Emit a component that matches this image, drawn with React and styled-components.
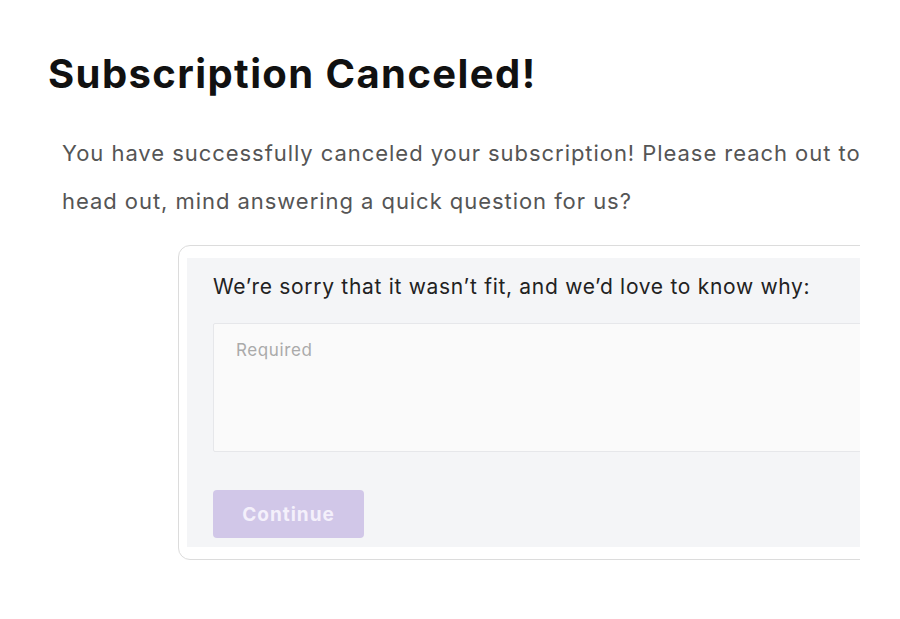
import styled, { createGlobalStyle } from "styled-components"

const GlobalStyle = createGlobalStyle`
  body {
    margin: 0;
    background: #ffffff;
    font-family: "Inter", "Liberation Sans", sans-serif;
  }
`

const Page = styled.div`
  width: 860px;
  height: 619px;
  overflow: hidden;
  padding-top: 50px;
  box-sizing: border-box;
`

const Title = styled.h1`
  margin: 0 0 0 48px;
  font-size: 40px;
  line-height: 48px;
  font-weight: 700;
  color: #111111;
  letter-spacing: 1.4px;
`

const Intro = styled.p`
  margin: 31px 0 0 62px;
  font-size: 22px;
  line-height: 48px;
  color: #555555;
  letter-spacing: 0.95px;
  white-space: nowrap;
`

const Card = styled.div`
  margin: 20px 0 0 178px;
  width: 800px;
  padding: 12px 0 12px 8px;
  border: 1.5px solid #dcdcdc;
  border-radius: 12px;
  background: #ffffff;
`

const Panel = styled.div`
  background: #f4f5f7;
  padding: 17px 0 9px 26px;
  display: flex;
  flex-direction: column;
`

const Question = styled.div`
  font-size: 21px;
  line-height: 24px;
  color: #222222;
  letter-spacing: 0.7px;
  white-space: nowrap;
`

const Answer = styled.textarea`
  margin-top: 24px;
  height: 129px;
  box-sizing: border-box;
  background: #fafafa;
  border: 1.5px solid #e6e7ea;
  border-radius: 2px;
  padding: 16px 22px;
  font-family: inherit;
  font-size: 17px;
  letter-spacing: 0.6px;
  color: #333333;
  resize: none;
  outline: none;
  &::placeholder {
    color: #aaaaaa;
  }
`

const ContinueButton = styled.button`
  margin-top: 38px;
  width: 151px;
  height: 48px;
  border: none;
  border-radius: 4px;
  background: #d1c7e8;
  color: #f4f0fb;
  font-family: inherit;
  font-size: 19px;
  font-weight: 700;
  letter-spacing: 1px;
  cursor: not-allowed;
`

export default function App() {
  return (
    <>
      <GlobalStyle />
      <Page>
        <Title>Subscription Canceled!</Title>
        <Intro>
          You have successfully canceled your subscription! Please reach out to us with any questions. Before you
          <br />
          head out, mind answering a quick question for us?
        </Intro>
        <Card>
          <Panel>
            <Question>We’re sorry that it wasn’t fit, and we’d love to know why:</Question>
            <Answer placeholder="Required" />
            <ContinueButton disabled>Continue</ContinueButton>
          </Panel>
        </Card>
      </Page>
    </>
  )
}
